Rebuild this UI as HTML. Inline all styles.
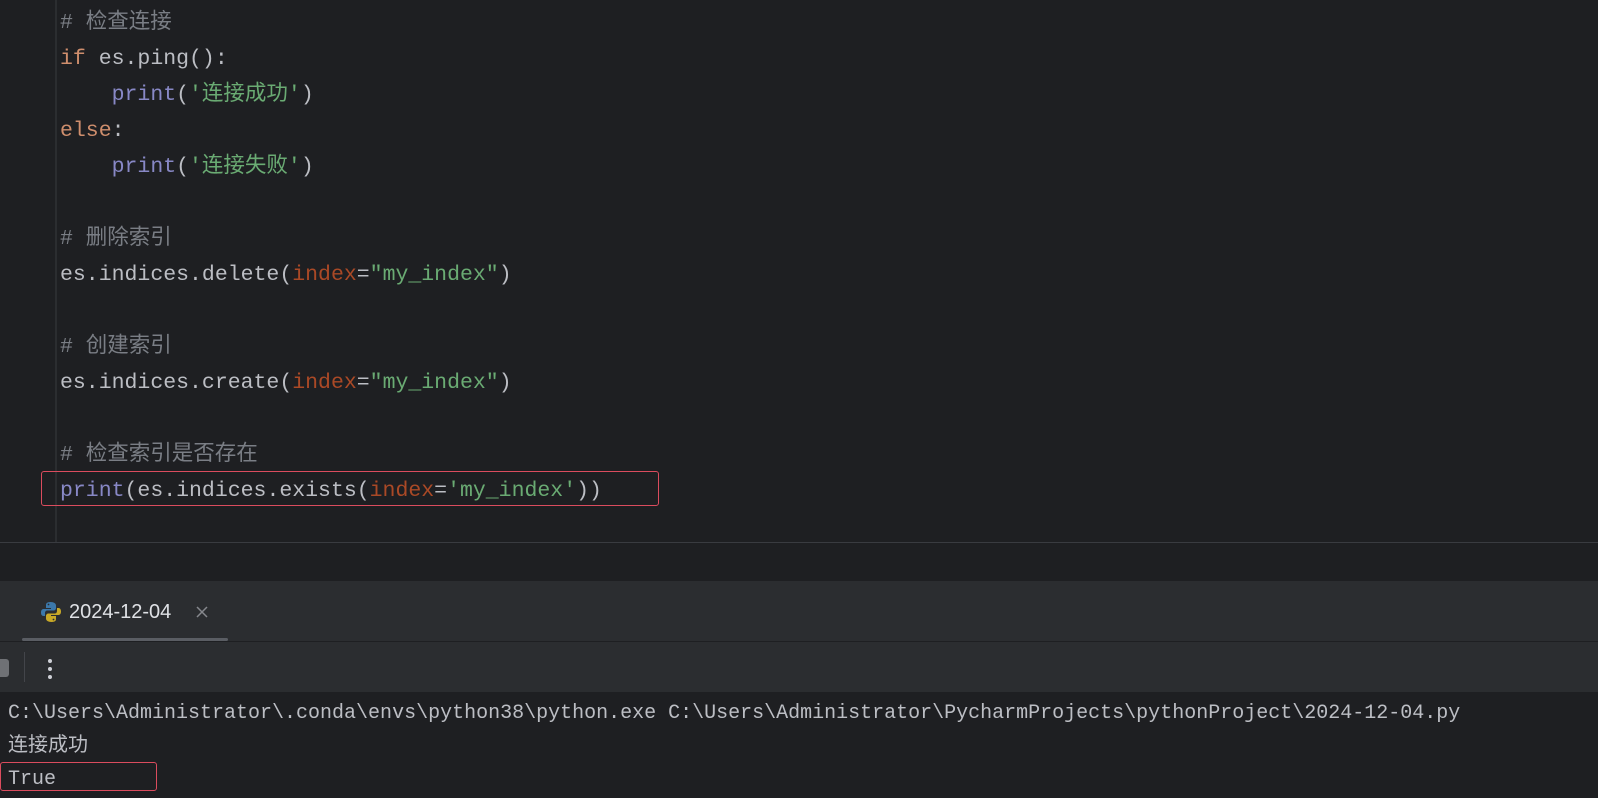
<!DOCTYPE html>
<html><head><meta charset="utf-8"><style>
*{margin:0;padding:0;box-sizing:border-box}
body{width:1598px;height:798px;background:#1e1f22;position:relative;overflow:hidden;font-family:"Liberation Mono","Noto Sans CJK SC",monospace;color:#bcbec4}
.gut{position:absolute;left:55px;top:0;width:2px;height:543px;background:#2b2d30}
.code{position:absolute;left:60px;top:5px;font-size:21.5px;line-height:36px;white-space:pre}
.c{color:#7a7e85}.k{color:#cf8e6d}.p{color:#8888c6}.s{color:#6aab73}.n{color:#aa4926}
.hl{position:absolute;border:1.5px solid #db4c5e;border-radius:3px}
.edb{position:absolute;left:0;top:542px;width:1598px;height:1px;background:#393b40}
.tabbar{position:absolute;left:0;top:581px;width:1598px;height:111px;background:#2b2d30}
.tabline{position:absolute;left:0;top:641px;width:1598px;height:1px;background:#1e1f22}
.out{position:absolute;left:8px;top:697px;font-size:20px;line-height:33px;white-space:pre}
</style></head><body>
<div class="gut"></div>
<div class="code"><span class="c"># 检查连接</span>
<span class="k">if</span> es.ping():
    <span class="p">print</span>(<span class="s">'连接成功'</span>)
<span class="k">else</span>:
    <span class="p">print</span>(<span class="s">'连接失败'</span>)

<span class="c"># 删除索引</span>
es.indices.delete(<span class="n">index</span>=<span class="s">"my_index"</span>)

<span class="c"># 创建索引</span>
es.indices.create(<span class="n">index</span>=<span class="s">"my_index"</span>)

<span class="c"># 检查索引是否存在</span>
<span class="p">print</span>(es.indices.exists(<span class="n">index</span>=<span class="s">'my_index'</span>))</div>
<div class="hl" style="left:41px;top:471px;width:618px;height:35px"></div>
<div class="edb"></div>
<div class="tabbar"></div>
<div class="tabline"></div>
<svg style="position:absolute;left:40px;top:601px" width="22" height="22" viewBox="0 0 22 22">
<path d="M10.5 1C6 1 6 3 6 4.5V7h5v1H3.5C1.5 8 1 10 1 11.5S1.5 15 3.5 15H5v-3c0-1.5 1-2.5 2.5-2.5h6c1.3 0 2.5-1 2.5-2.5V4.5C16 2.5 14 1 10.5 1z" fill="#3c78aa"/>
<path d="M11.5 21C16 21 16 19 16 17.5V15h-5v-1h7.5c2 0 2.5-2 2.5-3.5S20.5 7 18.5 7H17v3c0 1.5-1 2.5-2.5 2.5h-6C7.2 12.5 6 13.5 6 15v2.5C6 19.5 8 21 11.5 21z" fill="#c9a927"/>
<circle cx="8.5" cy="3.5" r="0.9" fill="#2b2d30"/><circle cx="13.5" cy="18.5" r="0.9" fill="#2b2d30"/></svg>
<div style="position:absolute;left:69px;top:598px;font-family:'Liberation Sans',sans-serif;font-size:20px;line-height:28px;color:#dfe1e5">2024-12-04</div>
<svg style="position:absolute;left:196px;top:606px" width="12" height="12"><path d="M1 1L11 11M11 1L1 11" stroke="#86888d" stroke-width="1.5"/></svg>
<div style="position:absolute;left:22px;top:638px;width:206px;height:3px;border-radius:2px;background:#5a5d63"></div>
<div style="position:absolute;left:-4px;top:659px;width:13px;height:18px;border-radius:3px;background:#6f7175"></div>
<div style="position:absolute;left:24px;top:652px;width:1px;height:30px;background:#43454a"></div>
<div style="position:absolute;left:48px;top:659px;width:4px;height:4px;border-radius:2px;background:#ced0d6"></div>
<div style="position:absolute;left:48px;top:667px;width:4px;height:4px;border-radius:2px;background:#ced0d6"></div>
<div style="position:absolute;left:48px;top:675px;width:4px;height:4px;border-radius:2px;background:#ced0d6"></div>
<div class="out">C:\Users\Administrator\.conda\envs\python38\python.exe C:\Users\Administrator\PycharmProjects\pythonProject\2024-12-04.py
连接成功
True</div>
<div class="hl" style="left:0;top:762px;width:157px;height:29px"></div>
</body></html>
